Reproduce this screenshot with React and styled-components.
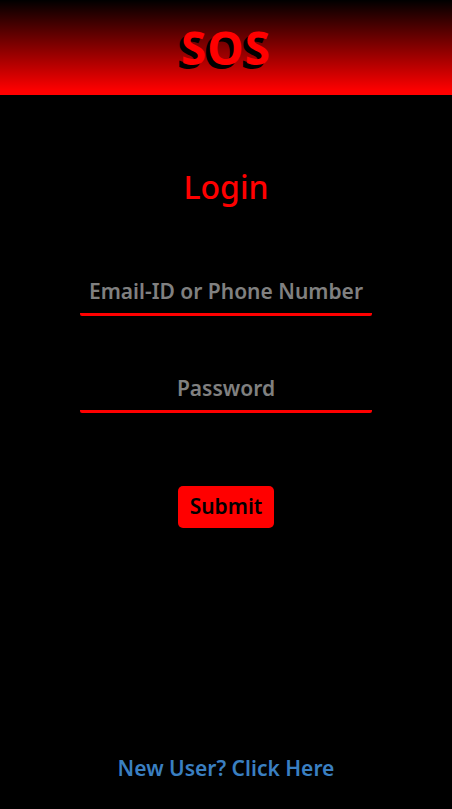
import React from 'react';
import styled, { createGlobalStyle } from 'styled-components';

const Global = createGlobalStyle`
  html, body {
    margin: 0;
    padding: 0;
    background: #000;
    font-family: "Noto Sans", "Open Sans", sans-serif;
  }
  #root {
    min-height: 100vh;
  }
`;

const Page = styled.div`
  min-height: 100vh;
  display: flex;
  flex-direction: column;
  background: #000;
`;

const Header = styled.header`
  height: 91px;
  background: linear-gradient(to bottom, #000 0%, #ff0000 100%);
  border-bottom: 4px solid #ff0000;
  display: flex;
  align-items: center;
  justify-content: center;
`;

const Logo = styled.h1`
  margin: 0;
  color: #ff0000;
  font-size: 46px;
  font-weight: 700;
  letter-spacing: 1px;
  text-shadow: -4px 4px 0 #000;
  padding-top: 2px;
`;

const Main = styled.main`
  flex: 1;
  display: flex;
  flex-direction: column;
  align-items: center;
  padding-top: 66px;
`;

const Title = styled.h2`
  margin: 0 0 59px;
  color: #ff0000;
  font-size: 32px;
  font-weight: 500;
  line-height: 52px;
`;

const Form = styled.form`
  display: flex;
  flex-direction: column;
  align-items: center;
`;

const Field = styled.input`
  width: 292px;
  box-sizing: border-box;
  background: transparent;
  border: none;
  border-bottom: 3px solid #ff0000;
  border-radius: 2px;
  color: #999;
  text-align: center;
  font-family: inherit;
  font-size: 21px;
  font-weight: 600;
  padding: 5px 0 8px;
  margin-bottom: ${p => p.$gap}px;
  outline: none;
  &::placeholder {
    color: #808080;
  }
`;

const Submit = styled.button`
  background: #ff0000;
  color: #000;
  border: none;
  border-radius: 5px;
  font-family: inherit;
  font-size: 21px;
  font-weight: 600;
  padding: 6px 12px 8px;
  cursor: pointer;
`;

const Footer = styled.footer`
  display: flex;
  justify-content: center;
  padding-bottom: 27px;
`;

const SignupLink = styled.a`
  color: #3a7fc1;
  font-size: 21px;
  font-weight: 600;
  text-decoration: none;
`;

export default function App() {
  return (
    <Page>
      <Global />
      <Header>
        <Logo>SOS</Logo>
      </Header>
      <Main>
        <Title>Login</Title>
        <Form onSubmit={e => e.preventDefault()}>
          <Field type="text" placeholder="Email-ID or Phone Number" $gap={53} />
          <Field type="password" placeholder="Password" $gap={73} />
          <Submit type="submit">Submit</Submit>
        </Form>
      </Main>
      <Footer>
        <SignupLink href="#">New User? Click Here</SignupLink>
      </Footer>
    </Page>
  );
}
